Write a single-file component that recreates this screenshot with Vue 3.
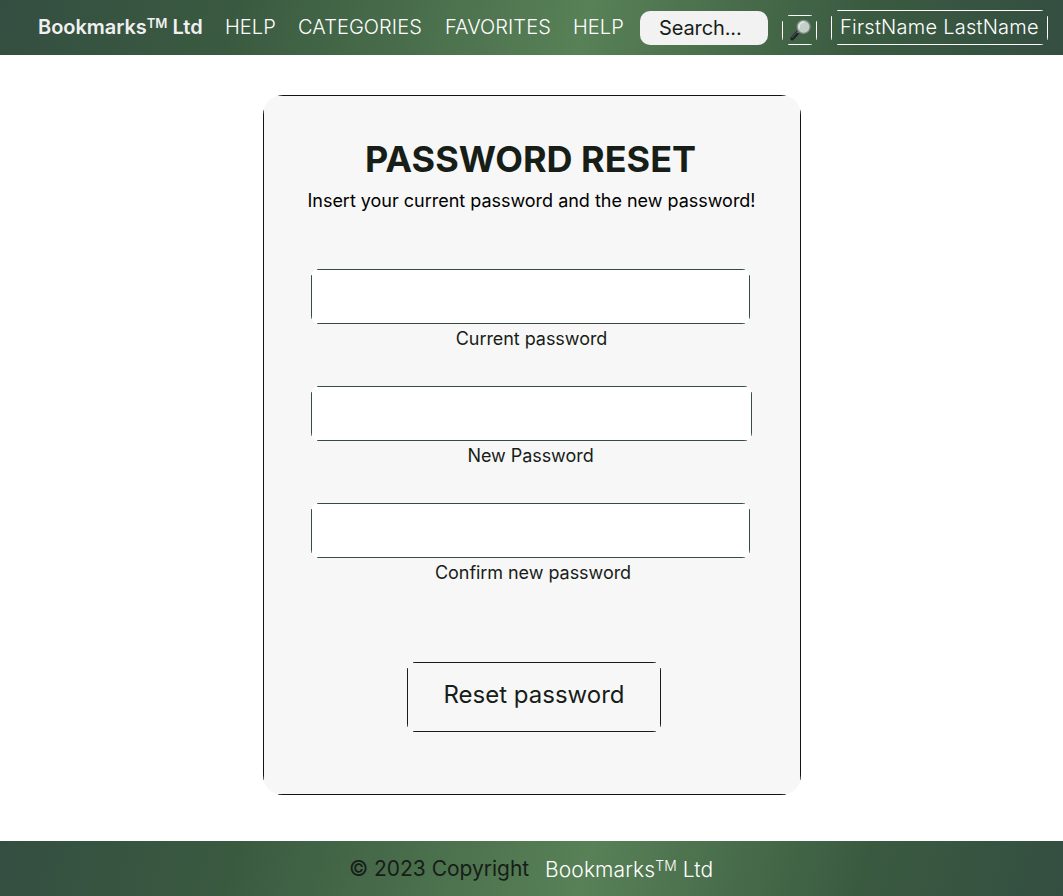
<script setup>
const links = ['HELP', 'CATEGORIES', 'FAVORITES', 'HELP']
const fields = [
  { id: 'current', label: 'Current password' },
  { id: 'new', label: 'New Password' },
  { id: 'confirm', label: 'Confirm new password' },
]
</script>

<template>
  <div class="page">
    <header class="bar nav">
      <a class="brand">Bookmarks<span class="tm">TM</span> Ltd</a>
      <nav class="links">
        <a v-for="(link, i) in links" :key="i" :class="'link-' + i">{{ link }}</a>
      </nav>
      <div class="search">Search...</div>
      <button class="edges lens" aria-label="Search">
        <svg width="22" height="22" viewBox="0 0 22 22">
          <path d="M2.3 19.6 L7.2 14.1" stroke="#20232a" stroke-width="3.8" stroke-linecap="round" />
          <path d="M2 18.6 L6.5 13.6" stroke="#60616c" stroke-width="0.9" stroke-linecap="round" />
          <path d="M7.5 13.8 L9.3 11.8" stroke="#77716f" stroke-width="2" />
          <circle cx="13.6" cy="7.8" r="6.5" fill="#c5cfca" stroke="#858c86" stroke-width="1.3" />
          <path d="M9.2 9.5 A4.8 4.8 0 0 1 14.5 3.2" fill="none" stroke="#e0e6e2" stroke-width="1.6" />
        </svg>
      </button>
      <div class="edges user"><span>FirstName LastName</span></div>
    </header>

    <main>
      <section class="edges card">
        <h1>PASSWORD RESET</h1>
        <p>Insert your current password and the new password!</p>
        <div v-for="f in fields" :key="f.id" class="field">
          <input :id="f.id" type="password" class="edges" :class="'in-' + f.id" />
          <label :for="f.id" :class="'lb-' + f.id">{{ f.label }}</label>
        </div>
        <button class="edges reset">Reset password</button>
      </section>
    </main>

    <footer class="bar foot">
      <span class="copy">© 2023 Copyright</span>
      <a class="company">Bookmarks<span class="tm">TM</span> Ltd</a>
    </footer>
  </div>
</template>

<style>
body { margin: 0; background: #fff; }
</style>

<style scoped>
.page {
  display: flex;
  flex-direction: column;
  height: 896px;
  font-family: Inter, "Liberation Sans", sans-serif;
  color: #171d17;
  overflow: hidden;
}
.page * { box-sizing: border-box; }
.page a, .page span, .page label { white-space: nowrap; }
button, input { border: 0; padding: 0; font: inherit; color: inherit; outline: 0; }

/* Straight hairlines on each side, open at the rounded corners */
.edges {
  --line: #171d17;
  --fill: transparent;
  --cut: 5.5px;
  border-radius: 8px;
  background:
    linear-gradient(var(--line), var(--line)) top / calc(100% - 2 * var(--cut)) 1px no-repeat,
    linear-gradient(var(--line), var(--line)) bottom / calc(100% - 2 * var(--cut)) 1px no-repeat,
    linear-gradient(var(--line), var(--line)) left / 1px calc(100% - 2 * var(--cut)) no-repeat,
    linear-gradient(var(--line), var(--line)) right / 1px calc(100% - 2 * var(--cut)) no-repeat,
    var(--fill);
}

.bar {
  height: 55px;
  flex: none;
  display: flex;
  background: linear-gradient(105deg, #344e41 0%, #3a5a40 22%, #588157 55%, #3a5a40 81%, #344e41 100%);
  color: #fff;
  font-size: 20px;
  line-height: 24px;
}
.tm { display: inline-block; font-size: 0.66em; line-height: 1; transform: translateY(-0.44em); }

.nav { padding-left: 38px; }
.brand { width: 187px; padding-top: 15px; font-weight: 600; color: #f0f0f0; letter-spacing: -0.04px; }
.links { display: flex; padding-top: 15px; width: 415px; font-weight: 300; letter-spacing: 0.07px; }
.link-0 { width: 73px; }
.link-1 { width: 147px; }
.link-2 { width: 128px; }
.search {
  width: 128px;
  height: 34px;
  margin-top: 11px;
  padding: 5px 0 0 19px;
  border-radius: 10px;
  background: #f2f2f2;
  color: #171d17;
  letter-spacing: -0.12px;
}
.lens {
  --line: #fff;
  width: 35px;
  height: 30px;
  margin: 15px 0 0 14px;
  display: flex;
  padding: 4px 0 0 8px;
}
.user {
  --line: #fff;
  width: 217px;
  height: 35px;
  margin: 10px 0 0 14px;
  padding: 5px 0 0 9px;
  font-weight: 300;
  letter-spacing: 0.24px;
}

main { flex: 1; display: flex; padding: 40px 0 0 263px; }
.card {
  --line: #111511;
  --fill: #f7f7f7;
  --cut: 15px;
  border-radius: 20px;
  width: 538px;
  height: 700px;
  display: flex;
  flex-direction: column;
  align-items: center;
}
h1 { margin: 42px 3px 0 0; font-size: 36px; line-height: 44px; font-weight: 700; white-space: nowrap; }
p { margin: 8px 1px 47px 0; font-size: 18px; line-height: 24px; color: #000; white-space: nowrap; letter-spacing: -0.015px; }
.field { width: 441px; height: 117px; margin-right: 1px; padding-top: 9px; display: flex; flex-direction: column; flex: none; }
.field input { --line: #344e41; --fill: #fff; width: 439px; height: 55px; flex: none; }
.field .in-new { width: 441px; }
.field label { text-align: center; font-size: 18px; line-height: 24px; margin-top: 3px; letter-spacing: -0.05px; }
.field .lb-new { margin-right: 2px; }
.field .lb-confirm { margin-left: 3px; }
.reset { width: 254px; height: 70px; margin: 51px 0 0 4px; padding-bottom: 5px; font-size: 24px; }

.foot { padding: 16px 0 0 349px; }
.copy { width: 196px; color: #171d17; font-size: 21px; letter-spacing: -0.02px; }
.company { font-size: 21px; font-weight: 300; padding-top: 1px; letter-spacing: 0.12px; }
</style>
